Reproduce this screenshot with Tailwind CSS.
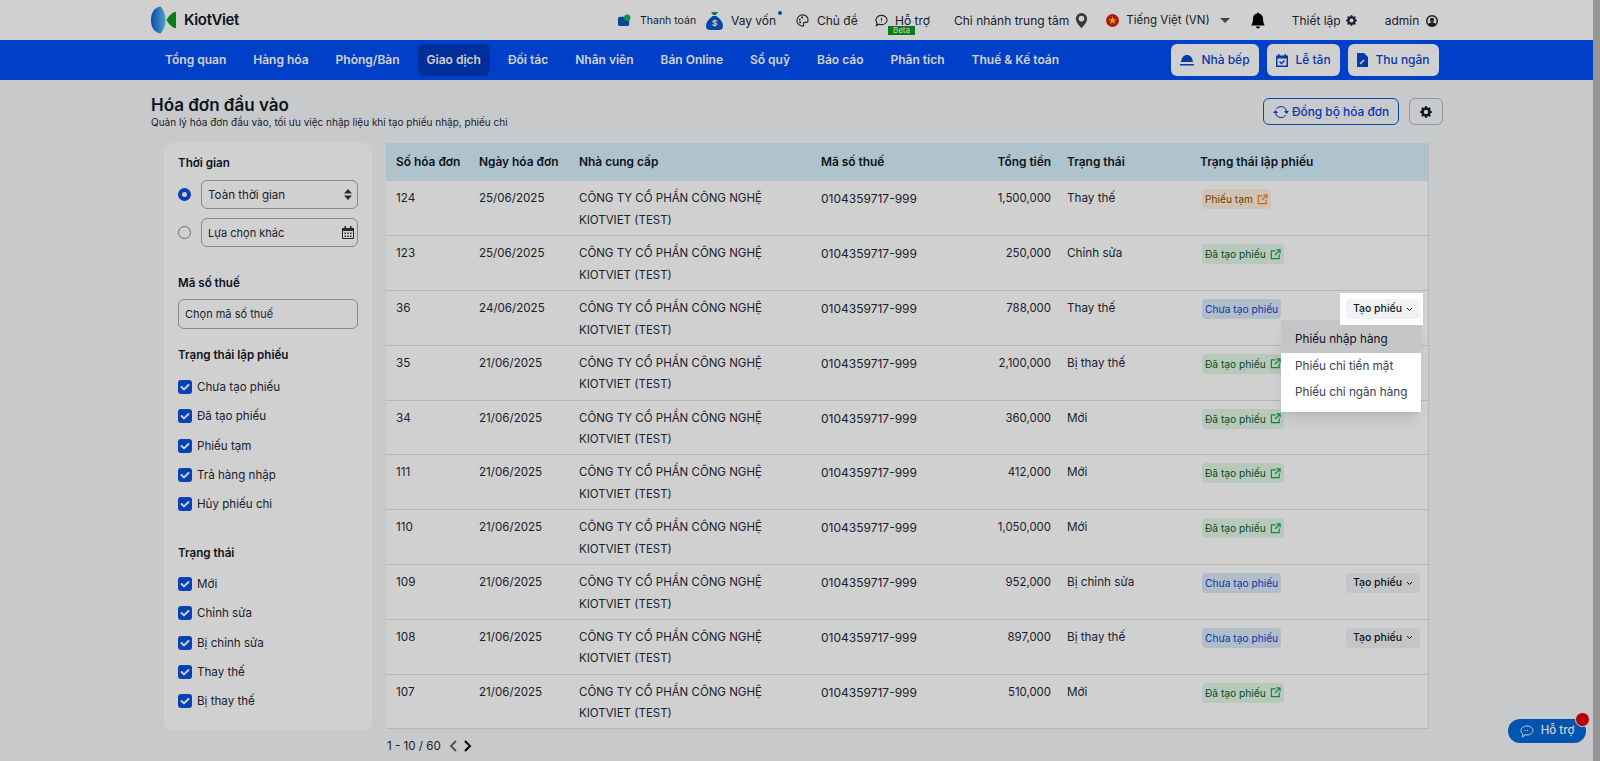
<!DOCTYPE html>
<html lang="vi">
<head>
  <meta charset="UTF-8">
  <title>Hóa đơn đầu vào</title>
  <script src="https://cdn.jsdelivr.net/npm/@tailwindcss/browser@4"></script>
</head>
<body class="bg-[#f5f7f9] font-['Inter','Noto_Sans',sans-serif] text-[#111827] overflow-hidden">
  <svg class="hidden">
    <symbol id="gear" viewBox="0 0 16 16"><path fill="currentColor" d="M9.405 1.05c-.413-1.4-2.397-1.4-2.81 0l-.1.34a1.464 1.464 0 0 1-2.105.872l-.31-.17c-1.283-.698-2.686.705-1.987 1.987l.169.311c.446.82.023 1.841-.872 2.105l-.34.1c-1.4.413-1.4 2.397 0 2.81l.34.1a1.464 1.464 0 0 1 .872 2.105l-.17.31c-.698 1.283.705 2.686 1.987 1.987l.311-.169a1.464 1.464 0 0 1 2.105.872l.1.34c.413 1.4 2.397 1.4 2.81 0l.1-.34a1.464 1.464 0 0 1 2.105-.872l.31.17c1.283.698 2.686-.705 1.987-1.987l-.169-.311a1.464 1.464 0 0 1 .872-2.105l.34-.1c1.4-.413 1.4-2.397 0-2.81l-.34-.1a1.464 1.464 0 0 1-.872-2.105l.17-.31c.698-1.283-.705-2.686-1.987-1.987l-.311.169a1.464 1.464 0 0 1-2.105-.872zM8 10.93a2.929 2.929 0 1 1 0-5.86 2.929 2.929 0 0 1 0 5.858z"/></symbol>
    <symbol id="ext" viewBox="0 0 12 12"><path fill="none" stroke="currentColor" stroke-width="1.3" d="M6 2H1.5v8.5H10V6M7 1h4v4M11 1 5.5 6.5"/></symbol>
    <symbol id="check" viewBox="0 0 14 14"><rect width="14" height="14" rx="3" fill="#0b4fe0"/><path fill="none" stroke="#fff" stroke-width="2" stroke-linecap="round" stroke-linejoin="round" d="m3.5 7 2.5 2.4 4.500-4.400"/></symbol>
  </svg>

  <div class="flex h-screen">
    <div class="flex-1 min-w-0 relative">
      <!-- thanh trên cùng -->
      <header class="h-10 bg-white flex items-center relative">
        <div class="flex items-center w-[460px] pl-[151px]">
          <svg class="w-[25px] h-[28px]" viewBox="0 0 24 26"><defs><linearGradient id="lg" x1="0" x2="1"><stop offset="0" stop-color="#0a5fd8"/><stop offset="1" stop-color="#63c2ee"/></linearGradient></defs><path fill="url(#lg)" d="M9 0C3 1 0 6 0 13s3 12 9 13c3-3 5-8 5-13S12 3 9 0z"/><path fill="#0a9a1e" d="M24 5v16c-3 0-8-5-9-8 1-3 6-8 9-8z"/></svg>
          <span class="ml-[8px] text-[15px] font-semibold tracking-tight">KiotViet</span>
        </div>
        <div class="flex items-center text-[12px] text-[#1f2937] mt-px">
          <svg class="ml-[158px] w-[13px] h-[13px]" viewBox="0 0 14 14"><rect y="3" width="12" height="10" rx="2" fill="#0b56c8"/><circle cx="10" cy="4" r="3.500" fill="#22b14c"/></svg>
          <span class="ml-[9px] text-[10.500px] w-[58px] whitespace-nowrap">Thanh toán</span>
          <svg class="ml-[8px] w-[17px] h-[18px]" viewBox="0 0 17 18"><path fill="#0a9a6e" d="M5 0h7l-2 3H7z"/><path fill="#0b56c8" d="M6.500 4h4C14 7 17 10 17 14c0 3-2 4-4 4H4c-2 0-4-1-4-4 0-4 3-7 6.500-10z"/><text x="8.500" y="14" text-anchor="middle" font-size="8" font-weight="700" fill="#fff">$</text></svg>
          <span class="ml-[8px] relative w-[65px]">Vay vốn<span class="absolute left-[47px] top-[-1px] w-[4px] h-[4px] rounded-full bg-[#0b56c8]"></span></span>
          <svg class="w-[13px] h-[13px]" viewBox="0 0 14 14"><path fill="none" stroke="#333" stroke-width="1.200" d="M7 1a6 6 0 0 0 0 12c1.500 0 1.500-1 1-2-.5-1.200.5-2 1.500-2H11c1.500 0 2-1 2-2.500C13 3 10 1 7 1z"/><circle cx="4" cy="6" r="1"/><circle cx="6.500" cy="3.800" r="1"/><circle cx="4.500" cy="9" r="1"/></svg>
          <span class="ml-[8px] w-[58px]">Chủ đề</span>
          <svg class="w-[13px] h-[13px]" viewBox="0 0 14 14"><path fill="none" stroke="#333" stroke-width="1.200" d="M7 1.500c3.300 0 6 2.200 6 5s-2.700 5-6 5c-1 0-1.800-.2-2.600-.5L1.500 12.500l.8-2.800C1.500 8.800 1 7.700 1 6.500c0-2.800 2.700-5 6-5z"/><path stroke="#333" stroke-width="1.200" d="M7 4v3M7 8v1"/></svg>
          <span class="ml-[7px] w-[59px] relative">Hỗ trợ<span class="absolute left-[-7px] top-[14px] w-[27px] h-[9px] bg-[#0a9a1e] text-white text-[8px] leading-[9px] text-center">Beta</span></span>
          <span>Chi nhánh trung tâm</span>
          <svg class="ml-[5px] w-[15px] h-[15px] text-[#444]" viewBox="0 0 16 16"><path fill="currentColor" d="M8 16s6-5.686 6-10A6 6 0 0 0 2 6c0 4.314 6 10 6 10zm0-7a3 3 0 1 1 0-6 3 3 0 0 1 0 6z"/></svg>
          <svg class="ml-[17px] w-[13px] h-[13px]" viewBox="0 0 14 14"><circle cx="7" cy="7" r="7" fill="#d81e1e"/><path fill="#ffd400" d="m7 2.500 1.100 3.100h3.300L8.700 7.600l1 3.100L7 8.800l-2.700 1.900 1-3.100-2.700-2h3.300z"/></svg>
          <span class="ml-[7px] text-[11.500px]">Tiếng Việt (VN)</span>
          <span class="ml-[10px] w-0 h-0 border-x-[5px] border-x-transparent border-t-[5px] border-t-[#555]"></span>
          <svg class="ml-[20px] w-[16px] h-[17px]" viewBox="0 0 16 16"><path d="M8 16a2 2 0 0 0 2-2H6a2 2 0 0 0 2 2zm.995-14.901a1 1 0 1 0-1.990 0A5.002 5.002 0 0 0 3 6c0 1.098-.5 6-2 7h14c-1.500-1-2-5.902-2-7 0-2.420-1.720-4.440-4.005-4.901z"/></svg>
          <span class="ml-[26px]">Thiết lập</span>
          <svg class="ml-[5px] w-[11px] h-[11px]"><use href="#gear"/></svg>
          <span class="ml-[28px]">admin</span>
          <svg class="ml-[7px] w-[12px] h-[12px]" viewBox="0 0 16 16"><circle cx="8" cy="8" r="7" fill="none" stroke="#222" stroke-width="2"/><circle cx="8" cy="6.500" r="2.700" fill="#222"/><path fill="#222" d="M3 13c1-2.500 3-3.300 5-3.300s4 .8 5 3.300l-2 1.500H5z"/></svg>
        </div>
      </header>

      <!-- menu chính -->
      <nav class="h-10 bg-[#004ef5] flex items-center justify-between pl-[156px] pr-[154px]">
        <div class="flex gap-[9px] text-[12px] font-semibold text-white leading-[32px]">
          <a class="px-[9px]">Tổng quan</a>
          <a class="px-[9px]">Hàng hóa</a>
          <a class="px-[9px]">Phòng/Bàn</a>
          <a class="px-[9px] rounded-md bg-[#0039bd]">Giao dịch</a>
          <a class="px-[9px]">Đối tác</a>
          <a class="px-[9px]">Nhân viên</a>
          <a class="px-[9px]">Bán Online</a>
          <a class="px-[9px]">Sổ quỹ</a>
          <a class="px-[9px]">Báo cáo</a>
          <a class="px-[9px]">Phân tích</a>
          <a class="px-[9px]">Thuế &amp; Kế toán</a>
        </div>
        <div class="flex gap-2 text-[12px] font-medium text-[#0b45d0]">
          <a class="h-8 w-[88px] rounded-md bg-white flex items-center justify-center gap-[7px]">
            <svg class="w-[14px] h-[12px]" viewBox="0 0 14 12"><path fill="currentColor" d="M7 1c3 0 5.500 2.500 6 7H1c.5-4.500 3-7 6-7zM0 10h14v1.500H0z"/></svg>Nhà bếp</a>
          <a class="h-8 w-[73px] rounded-md bg-white flex items-center justify-center gap-[7px]">
            <svg class="w-[12px] h-[13px]" viewBox="0 0 12 13"><path fill="currentColor" d="M2 0h1.500v1.500h5V0H10v1.500h2V13H0V1.500h2zM1.500 4.500V11.500h9v-7z"/><path fill="none" stroke="currentColor" stroke-width="1.500" d="m3.500 7.500 2 2 3-3"/></svg>Lễ tân</a>
          <a class="h-8 w-[91px] rounded-md bg-white flex items-center justify-center gap-[7px]">
            <svg class="w-[11px] h-[14px]" viewBox="0 0 11 14"><path fill="currentColor" d="M0 0h7l4 4v10H0z"/><path stroke="#fff" stroke-width="1.500" d="m3 11 4-4"/></svg>Thu ngân</a>
        </div>
      </nav>

      <!-- tiêu đề trang -->
      <div class="h-[63px] pl-[151px] pr-[150px] flex justify-between items-start">
        <div class="pt-[15px]">
          <h1 class="text-[17px] leading-[20px] font-semibold">Hóa đơn đầu vào</h1>
          <p class="text-[10px] leading-[14px] text-[#1f2937]">Quản lý hóa đơn đầu vào, tối ưu việc nhập liệu khi tạo phiếu nhập, phiếu chi</p>
        </div>
        <div class="flex gap-[10px] pt-[18px]">
          <button class="h-[27px] w-[136px] rounded-md border border-[#0b56d8] text-[#0b45d0] text-[11.900px] font-medium flex items-center justify-center gap-[3px]">
            <svg class="w-[16px] h-[16px]" viewBox="0 0 16 16"><path fill="currentColor" d="M11.534 7h3.932a.25.25 0 0 1 .192.41l-1.966 2.360a.25.25 0 0 1-.384 0l-1.966-2.360a.25.25 0 0 1 .192-.41zm-11 2h3.932a.25.25 0 0 0 .192-.41L2.692 6.230a.25.25 0 0 0-.384 0L.342 8.590A.25.25 0 0 0 .534 9z"/><path fill="currentColor" d="M8 3c-1.552 0-2.940.707-3.857 1.818a.5.5 0 1 1-.771-.636A6.002 6.002 0 0 1 13.917 7H12.900A5.002 5.002 0 0 0 8 3zM3.100 9a5.002 5.002 0 0 0 8.757 2.182.5.5 0 1 1 .771.636A6.002 6.002 0 0 1 2.083 9H3.100z"/></svg>
            Đồng bộ hóa đơn</button>
          <button class="h-[27px] w-[34px] rounded-md border border-[#b8b8b8] flex items-center justify-center">
            <svg class="w-[12px] h-[12px]"><use href="#gear"/></svg></button>
        </div>
      </div>

      <div class="flex pl-[164px] pr-[164px] gap-[14px] items-start">
        <!-- bộ lọc -->
        <aside class="w-[208px] h-[587px] shrink-0 bg-white rounded-lg pt-[12px] px-[14px] text-[11.600px] leading-[16px]">
          <h3 class="font-semibold">Thời gian</h3>
          <div class="mt-[9px] flex items-center gap-[10px]">
            <span class="w-[13px] h-[13px] rounded-full border-[4px] border-[#0b4fe0] bg-white shrink-0"></span>
            <div class="h-[29px] flex-1 rounded-md border border-[#a8a8a8] flex items-center justify-between pl-[6px] pr-[5px]">
              <span class="text-[#1f2937]">Toàn thời gian</span>
              <svg class="w-[8px] h-[11px]" viewBox="0 0 8 11"><path fill="#333" d="M4 0l4 4.500H0zM4 11 0 6.500h8z"/></svg>
            </div>
          </div>
          <div class="mt-[9px] flex items-center gap-[10px]">
            <span class="w-[13px] h-[13px] rounded-full border border-[#888] bg-white shrink-0"></span>
            <div class="h-[29px] flex-1 rounded-md border border-[#a8a8a8] flex items-center justify-between pl-[6px] pr-[3px]">
              <span class="text-[#1f2937] text-[11px]">Lựa chọn khác</span>
              <svg class="w-[12px] h-[13px]" viewBox="0 0 12 13"><path fill="none" stroke="#333" d="M.5 2.500h11v10H.5z"/><path fill="#333" d="M0 2h12v3H0zM2.500 0h1.500v2H2.500zM8 0h1.500v2H8zM2.500 6.500h1.500V8H2.500zM5.300 6.500h1.500V8H5.300zM8 6.500h1.500V8H8zM2.500 9.500h1.500V11H2.500zM5.300 9.500h1.500V11H5.300zM8 9.500h1.500V11H8z"/></svg>
            </div>
          </div>
          <h3 class="mt-[28px] font-semibold">Mã số thuế</h3>
          <div class="mt-[8px] h-[30px] rounded-md border border-[#a8a8a8] flex items-center pl-[6px] text-[11px] text-[#1f2937]">Chọn mã số thuế</div>
          <h3 class="mt-[18px] font-semibold">Trạng thái lập phiếu</h3>
          <div id="f1" class="mt-[16px] flex flex-col gap-[13.300px]"></div>
          <h3 class="mt-[33px] font-semibold">Trạng thái</h3>
          <div id="f2" class="mt-[15px] flex flex-col gap-[13.300px]"></div>
        </aside>

        <!-- bảng hóa đơn -->
        <div class="flex-1 min-w-0">
          <table class="w-full table-fixed text-[11.700px] leading-[21.600px] text-[#1f2937] bg-white border-r border-b border-[#e2e5e9]">
            <thead>
              <tr class="h-[38px] bg-[#d6f0fa] text-left text-[11.900px] text-[#111827]">
                <th class="w-[84px] pl-[10px] font-semibold">Số hóa đơn</th>
                <th class="w-[100px] pl-[9px] font-semibold">Ngày hóa đơn</th>
                <th class="w-[242px] pl-[9px] font-semibold">Nhà cung cấp</th>
                <th class="w-[148px] pl-[9px] font-semibold">Mã số thuế</th>
                <th class="w-[100px] pr-[9px] text-right font-semibold">Tổng tiền</th>
                <th class="w-[131px] pl-[7px] font-semibold">Trạng thái</th>
                <th class="w-[139px] pl-[9px] font-semibold whitespace-nowrap">Trạng thái lập phiếu</th>
                <th></th>
              </tr>
            </thead>
            <tbody id="rows"></tbody>
          </table>
          <div class="mt-[7px] flex items-center text-[11.600px] leading-[20px]">
            <span class="ml-px text-[#1f2937]">1 - 10 / 60</span>
            <svg class="ml-[8px] w-[8px] h-[12px]" viewBox="0 0 8 12"><path fill="none" stroke="#666" stroke-width="2" d="M7 1 2 6l5 5"/></svg>
            <svg class="ml-[7px] w-[8px] h-[12px]" viewBox="0 0 8 12"><path fill="none" stroke="#000" stroke-width="2" d="m1 1 5 5-5 5"/></svg>
          </div>
        </div>
      </div>

      <!-- nút hỗ trợ -->
      <div class="absolute left-[1508px] top-[719px] w-[78px] h-[24px] rounded-full bg-[#0068d8] text-white text-[11.500px] font-medium flex items-center justify-center gap-[7px]">
        <svg class="w-[14px] h-[13px]" viewBox="0 0 14 13"><path fill="none" stroke="#fff" d="M7 1c3.300 0 6 1.900 6 4.500S10.300 10 7 10c-.7 0-1.300-.1-1.900-.2L2.500 12l.4-2.900C1.700 8.300 1 7 1 5.500 1 2.900 3.700 1 7 1z"/><path stroke="#fff" stroke-dasharray="1 1.500" d="M4.500 5.500h5"/></svg>
        Hỗ trợ
        <span class="absolute right-[-4px] top-[-7px] w-[15px] h-[15px] rounded-full bg-[#e00000] border border-white"></span>
      </div>

      <!-- lớp phủ hướng dẫn -->
      <div class="fixed inset-0 z-10 bg-black/[.185]"></div>
    </div>
    <div class="w-[7px] bg-[#b8b8b8]"></div>
  </div>

  <script>
    const checks = ['Chưa tạo phiếu', 'Đã tạo phiếu', 'Phiếu tạm', 'Trả hàng nhập', 'Hủy phiếu chi'];
    const checks2 = ['Mới', 'Chỉnh sửa', 'Bị chỉnh sửa', 'Thay thế', 'Bị thay thế'];
    const checkRow = t => `<label class="flex items-center gap-[5px] h-[16px] text-[#1f2937]"><svg class="w-[14px] h-[14px]"><use href="#check"/></svg>${t}</label>`;
    f1.innerHTML = checks.map(checkRow).join('');
    f2.innerHTML = checks2.map(checkRow).join('');

    const badges = {
      tam: `<span class="inline-flex items-center gap-[4px] h-[20px] px-[3px] rounded bg-[#ffeedd] text-[#8a4b08] text-[10.200px] leading-[20px]">Phiếu tạm<svg class="w-[11px] h-[11px] text-[#e8862a]"><use href="#ext"/></svg></span>`,
      da: `<span class="inline-flex items-center gap-[4px] h-[20px] px-[3px] rounded bg-[#e2f5e6] text-[#0a5c2a] text-[10.200px] leading-[20px]">Đã tạo phiếu<svg class="w-[11px] h-[11px] text-[#14a84a]"><use href="#ext"/></svg></span>`,
      chua: `<span class="inline-flex items-center h-[20px] px-[3px] rounded bg-[#dbe8f8] text-[#0b45d0] text-[10.200px] leading-[20px]">Chưa tạo phiếu</span>`
    };
    const chevron = `<svg class="w-[7px] h-[5px]" viewBox="0 0 7 5"><path fill="none" stroke="currentColor" d="m1 1 2.500 2.500L6 1"/></svg>`;
    const taoPhieu = `<button class="h-[20px] w-[74px] rounded bg-[#f1f2f4] text-[10.500px] font-medium text-[#111827] flex items-center justify-center gap-[4px]">Tạo phiếu ${chevron}</button>`;
    const menu = `
      <div class="absolute left-[-49px] top-[21px] w-[140px] h-[92px] bg-white rounded shadow-lg text-[11.700px] text-[#374151]">
        <div class="h-[33px] pl-[14px] leading-[38px] bg-[#f1f2f4] rounded-t text-[#111827]">Phiếu nhập hàng</div>
        <div class="relative z-20 bg-white">
          <div class="h-[26px] pl-[14px] leading-[26px]">Phiếu chi tiền mặt</div>
          <div class="h-[33px] pl-[14px] leading-[27px]">Phiếu chi ngân hàng</div>
        </div>
      </div>`;

    const data = [
      ['124', '25/06/2025', '1,500,000', 'Thay thế', 'tam'],
      ['123', '25/06/2025', '250,000', 'Chỉnh sửa', 'da'],
      ['36', '24/06/2025', '788,000', 'Thay thế', 'chua', 'open'],
      ['35', '21/06/2025', '2,100,000', 'Bị thay thế', 'da'],
      ['34', '21/06/2025', '360,000', 'Mới', 'da'],
      ['111', '21/06/2025', '412,000', 'Mới', 'da'],
      ['110', '21/06/2025', '1,050,000', 'Mới', 'da'],
      ['109', '21/06/2025', '952,000', 'Bị chỉnh sửa', 'chua', 'btn'],
      ['108', '21/06/2025', '897,000', 'Bị thay thế', 'chua', 'btn'],
      ['107', '21/06/2025', '510,000', 'Mới', 'da']
    ];
    rows.innerHTML = data.map(d => {
      let action = '';
      if (d[5] === 'btn') action = `<div class="flex justify-end pr-[8px]">${taoPhieu}</div>`;
      if (d[5] === 'open') action = `<div class="relative flex justify-end pr-[5px]"><div class="relative z-20 bg-white pr-[3px] pl-[6px] py-[6px] mt-[-6px] mb-[-6px]">${taoPhieu}</div>${menu}</div>`;
      return `<tr class="h-[54.800px] align-top border-b border-[#dde0e4]">
        <td class="pl-[10px] pt-[7px]">${d[0]}</td>
        <td class="pl-[9px] pt-[7px] text-[11.600px]">${d[1]}</td>
        <td class="pl-[9px] pt-[7px] text-[11.500px]">CÔNG TY CỔ PHẦN CÔNG NGHỆ KIOTVIET (TEST)</td>
        <td class="pl-[9px] pt-[7px] text-[12px]">0104359717-999</td>
        <td class="pr-[9px] pt-[7px] text-right text-[11.400px]">${d[2]}</td>
        <td class="pl-[7px] pt-[7px]">${d[3]}</td>
        <td class="pl-[11px] pt-[8px]">${badges[d[4]]}</td>
        <td class="pt-[8px]">${action}</td>
      </tr>`;
    }).join('');
  </script>
</body>
</html>
